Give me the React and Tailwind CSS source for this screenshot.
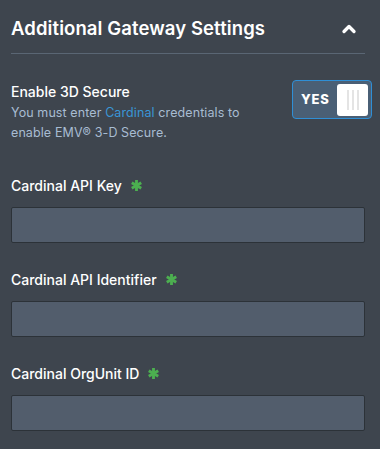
import { ChevronUp } from 'lucide-react';

function Asterisk() {
  return (
    <svg width="11" height="11" viewBox="0 0 10 10" className="ml-[9px] mt-[1px]">
      <g stroke="#4caf50" strokeWidth="2.6" strokeLinecap="butt">
        <line x1="5" y1="0" x2="5" y2="10" />
        <line x1="0.7" y1="2.5" x2="9.3" y2="7.5" />
        <line x1="0.7" y1="7.5" x2="9.3" y2="2.5" />
      </g>
    </svg>
  );
}

function Field({ label }) {
  return (
    <div className="mb-[26px]">
      <div className="flex items-center h-[20px] text-[14px] font-medium text-white">
        {label}
        <Asterisk />
      </div>
      <input className="mt-[12px] block w-full h-[36px] bg-[#525d6c] border border-[#2c3238] rounded-[2px] outline-none" />
    </div>
  );
}

export default function App() {
  return (
    <div className="w-[380px] h-[449px] overflow-hidden bg-[#3e454e] pl-[11px] pr-[15px] font-['Inter','Noto_Sans',sans-serif]">
      {/* Header */}
      <div className="flex items-center justify-between h-[54px] pt-[4px] border-b border-[#5a6674]">
        <h2 className="text-[18.5px] font-semibold text-white tracking-[0.1px]">Additional Gateway Settings</h2>
        <ChevronUp className="w-[20px] h-[20px] text-white mr-[6px]" strokeWidth={4} />
      </div>

      {/* 3D Secure */}
      <div className="flex justify-between pt-[28px]">
        <div>
          <p className="text-[14px] font-medium text-white leading-[20px]">Enable 3D Secure</p>
          <p className="text-[12.5px] leading-[20px] text-[#a8bcd2] mt-[1px] tracking-[0.1px]">
            You must enter <span className="text-[#3a96d6]">Cardinal</span> credentials to
            <br />
            enable EMV® 3-D Secure.
          </p>
        </div>
        <div className="-mt-[2px] mr-[-7px] w-[80px] h-[39px] shrink-0 rounded-[4px] border-[1.5px] border-[#2f8fd6] bg-[#4a5f75] flex items-center justify-between pl-[8px] pr-[3px]">
          <span className="text-[13px] font-extrabold text-white tracking-[0.8px]">YES</span>
          <div className="w-[31px] h-[32px] bg-white rounded-[3px] flex items-center justify-center gap-[3px]">
            <span className="w-[2px] h-[20px] bg-[#e4e4e4]" />
            <span className="w-[2px] h-[20px] bg-[#e4e4e4]" />
            <span className="w-[2px] h-[20px] bg-[#e4e4e4]" />
          </div>
        </div>
      </div>

      <div className="pt-[32px]">
        <Field label="Cardinal API Key" />
        <Field label="Cardinal API Identifier" />
        <Field label="Cardinal OrgUnit ID" />
      </div>
    </div>
  );
}
